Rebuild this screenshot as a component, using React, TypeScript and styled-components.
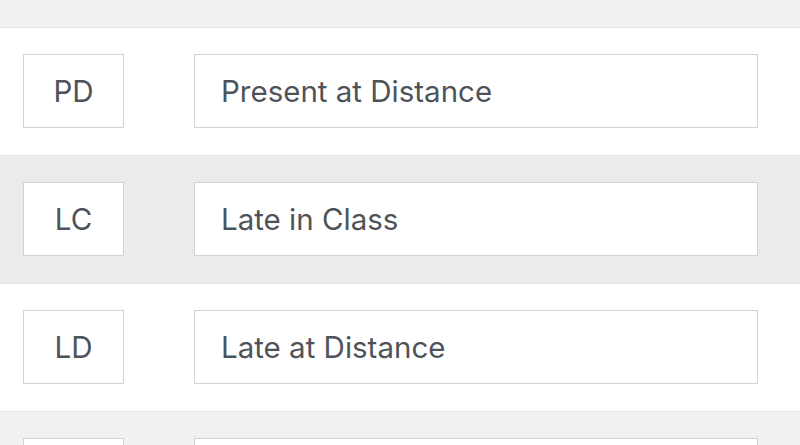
import * as React from 'react';
import styled, { createGlobalStyle } from 'styled-components';

const GlobalStyle = createGlobalStyle`
  * {
    box-sizing: border-box;
  }
  html, body {
    margin: 0;
    padding: 0;
    background: #ffffff;
    overflow: hidden;
  }
  body {
    font-family: Inter, "Noto Sans", "Liberation Sans", sans-serif;
    -webkit-font-smoothing: antialiased;
  }
`;

const List = styled.div`
  display: flex;
  flex-direction: column;
  margin-top: -100px;
`;

const Row = styled.div<{ $shade: string }>`
  display: flex;
  align-items: center;
  gap: 70px;
  padding: 26px 42px 27px 23px;
  background: ${p => p.$shade};
  border-bottom: 1px solid #e1e3e5;
`;

const CodeBox = styled.div`
  flex: 0 0 101px;
  height: 74px;
  display: flex;
  align-items: center;
  justify-content: center;
  background: #ffffff;
  border: 1.5px solid #cfd4d9;
  color: #4e5359;
  font-size: 29.5px;
`;

const LabelBox = styled.div`
  flex: 1;
  height: 74px;
  display: flex;
  align-items: center;
  padding-left: 26px;
  background: #ffffff;
  border: 1.5px solid #cfd4d9;
  color: #4e5359;
  font-size: 29.5px;
`;

interface Status {
  code: string;
  label: string;
  shade: string;
}

const statuses: Status[] = [
  { code: 'PC', label: 'Present in Class', shade: '#f1f1f1' },
  { code: 'PD', label: 'Present at Distance', shade: '#ffffff' },
  { code: 'LC', label: 'Late in Class', shade: '#ebebeb' },
  { code: 'LD', label: 'Late at Distance', shade: '#ffffff' },
  { code: 'AB', label: 'Absent', shade: '#f1f1f1' },
];

const App: React.FC = () => (
  <>
    <GlobalStyle />
    <List>
      {statuses.map(s => (
        <Row key={s.code} $shade={s.shade}>
          <CodeBox>{s.code}</CodeBox>
          <LabelBox>{s.label}</LabelBox>
        </Row>
      ))}
    </List>
  </>
);

export default App;
